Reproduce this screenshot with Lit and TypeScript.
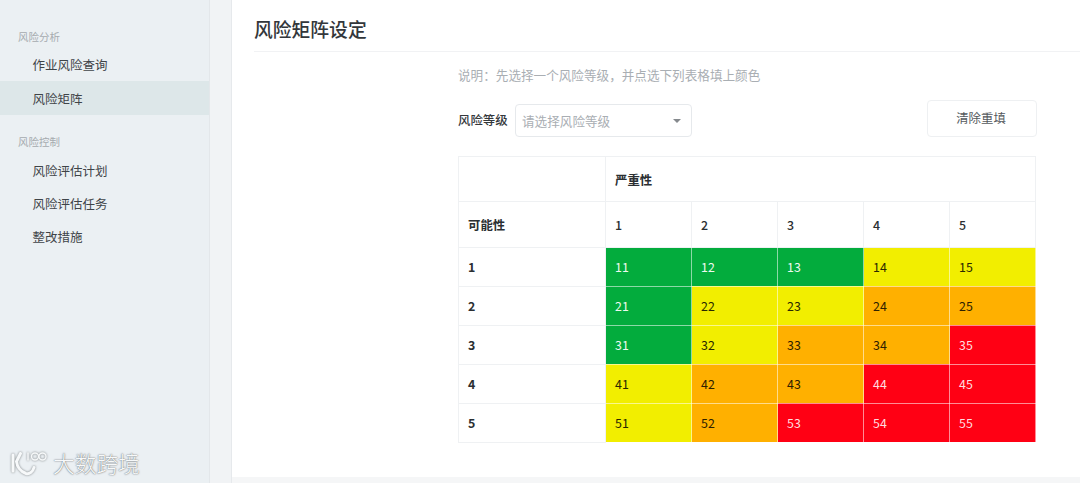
import { LitElement, html, css } from "lit";
import { customElement } from "lit/decorators.js";

const G = "g", Y = "y", O = "o", R = "r";
const MATRIX: string[][] = [
  [G, G, G, Y, Y],
  [G, Y, Y, O, O],
  [G, Y, O, O, R],
  [Y, O, O, R, R],
  [Y, O, R, R, R],
];

@customElement("app-root")
export class AppRoot extends LitElement {
  static styles = css`
    :host {
      display: block;
      width: 1080px;
      height: 483px;
      overflow: hidden;
      font-family: "Noto Sans CJK SC", "Noto Sans", sans-serif;
      background: #f5f6f7;
      color: #3f4448;
      position: relative;
    }
    .layout { display: flex; height: 483px; }
    .side {
      width: 210px;
      flex: none;
      background: #ebf0f3;
      border-right: 1px solid #e3e7ea;
      padding-top: 28px;
      box-sizing: border-box;
    }
    .group {
      font-size: 10.5px;
      line-height: 18px;
      color: #a6abaf;
      padding-left: 18px;
    }
    .item {
      height: 33px;
      line-height: 33px;
      font-size: 12.5px;
      padding-left: 32.5px;
      color: #3f4448;
    }
    .item.first { margin-top: 2px; }
    .item.active { background: #dde7e9; height: 34px; line-height: 35px; }
    .group.second { margin-top: 18px; margin-bottom: 3px; }
    .gap { width: 22px; flex: none; background: #f1f3f5; border-right: 1px solid #e6e9ec; box-sizing: border-box; }
    .main {
      flex: 1;
      height: 477px;
      background: #fff;
      padding-left: 22px;
      box-sizing: border-box;
    }
    .title {
      height: 52px;
      box-sizing: border-box;
      border-bottom: 1px solid #f1f2f4;
      font-size: 18.8px;
      line-height: 57px;
      color: #33373b;
      font-weight: 500;
    }
    .content { width: 579px; margin-left: 204px; }
    .hint {
      font-size: 12.6px;
      line-height: 18px;
      color: #a9aeb3;
      margin-top: 14px;
    }
    .controls {
      display: flex;
      align-items: flex-end;
      margin-top: 16px;
      height: 37px;
    }
    .label { font-size: 12.4px; font-weight: 500; line-height: 33px; width: 57px; color: #34383c; }
    .select {
      width: 177px;
      height: 33px;
      box-sizing: border-box;
      border: 1px solid #e6e9ec;
      border-radius: 4px;
      display: flex;
      align-items: center;
      justify-content: space-between;
      padding: 0 10px 0 6px;
      font-size: 12.6px;
      color: #a9aeb3;
    }
    .caret {
      width: 0; height: 0;
      border-left: 4px solid transparent;
      border-right: 4px solid transparent;
      border-top: 4px solid #85898d;
    }
    .btn {
      margin-left: auto;
      width: 110px;
      height: 37px;
      box-sizing: border-box;
      border: 1px solid #eef0f2;
      border-radius: 4px;
      background: #fff;
      color: #55595d;
      font: inherit;
      font-size: 12.4px;
      padding: 0 2px 2px 0;
    }
    table {
      border-collapse: collapse;
      table-layout: fixed;
      width: 578px;
      margin-top: 18.5px;
      font-size: 12.4px;
    }
    td {
      border: 1px solid #eff1f3;
      padding: 0 0 0 9px;
      box-sizing: border-box;
      color: #2b2f32;
      font-family: "Noto Sans CJK SC", "Noto Sans", sans-serif;
      font-weight: 500;
    }
    .c0 { width: 147px; }
    .c { width: 86px; }
    tr.h1 { height: 45px; }
    tr.h2 { height: 46px; }
    tr.h1 td, tr.h2 td { padding-top: 2px; }
    tr.r { height: 39px; }
    .b { font-weight: 700; }
    td.v { border-color: rgba(255, 255, 255, 0.55); font-weight: 400; }
    td.g { background: #03ac3d; color: #eef9f0; }
    td.y { background: #f2ee00; color: #2a2800; }
    td.o { background: #ffb000; color: #2e2000; }
    td.r { background: #ff0014; color: #ffdcdf; }
    .mark {
      position: absolute;
      left: 9px;
      top: 449px;
      display: flex;
      align-items: center;
      gap: 3px;
      color: #f7f9fa;
      font-size: 21.7px;
      line-height: 28px;
      font-weight: 300;
      text-shadow: 0 0 2px #7a7f82, 0 0 1px #7a7f82;
    }
    .mark svg { display: block; filter: drop-shadow(0 0 1.2px #7a7f82); }
  `;

  render() {
    return html`
      <div class="layout">
        <aside class="side">
          <div class="group">风险分析</div>
          <div class="item first">作业风险查询</div>
          <div class="item active">风险矩阵</div>
          <div class="group second">风险控制</div>
          <div class="item">风险评估计划</div>
          <div class="item">风险评估任务</div>
          <div class="item">整改措施</div>
        </aside>
        <div class="gap"></div>
        <main class="main">
          <div class="title">风险矩阵设定</div>
          <div class="content">
            <div class="hint">说明：先选择一个风险等级，并点选下列表格填上颜色</div>
            <div class="controls">
              <span class="label">风险等级</span>
              <div class="select"><span>请选择风险等级</span><span class="caret"></span></div>
              <button class="btn">清除重填</button>
            </div>
            <table>
              <colgroup>
                <col class="c0" /><col class="c" /><col class="c" /><col class="c" /><col class="c" /><col class="c" />
              </colgroup>
              <tr class="h1"><td></td><td class="b" colspan="5">严重性</td></tr>
              <tr class="h2">
                <td class="b">可能性</td>
                ${[1, 2, 3, 4, 5].map((n) => html`<td>${n}</td>`)}
              </tr>
              ${MATRIX.map(
                (row, i) => html`<tr class="r">
                  <td class="b">${i + 1}</td>
                  ${row.map((c, j) => html`<td class="v ${c}">${(i + 1) * 10 + j + 1}</td>`)}
                </tr>`
              )}
            </table>
          </div>
        </main>
      </div>
      <div class="mark">
        <svg width="41" height="28" viewBox="0 0 41 28" fill="none" stroke="#f7f9fa" stroke-linecap="round" stroke-linejoin="round">
          <path d="M4 6v16" stroke-width="3" />
          <path d="M11.5 4.5 L7.5 12.5 C8 17 11 22.5 17 24.5 C20.5 25.5 24 22.5 25 18.5" stroke-width="3" />
          <path d="M19 4v7" stroke-width="1.5" />
          <circle cx="26" cy="7.5" r="3.5" stroke-width="1.4" />
          <circle cx="33.5" cy="7.5" r="3.5" stroke-width="1.4" />
        </svg>
        <span>大数跨境</span>
      </div>
    `;
  }
}
